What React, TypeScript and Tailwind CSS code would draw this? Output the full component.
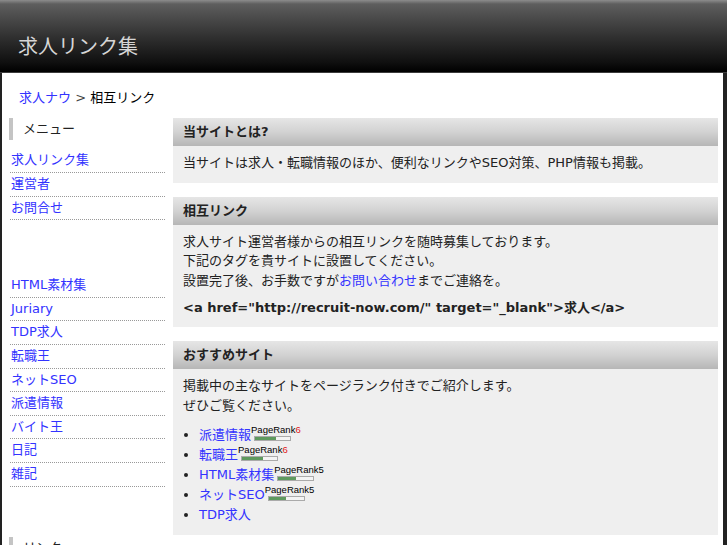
const topMenu = ["求人リンク集", "運営者", "お問合せ"]

const partnerMenu = [
  "HTML素材集",
  "Juriary",
  "TDP求人",
  "転職王",
  "ネットSEO",
  "派遣情報",
  "バイト王",
  "日記",
  "雑記",
]

const recommended = [
  { name: "派遣情報", rank: 6 },
  { name: "転職王", rank: 6 },
  { name: "HTML素材集", rank: 5 },
  { name: "ネットSEO", rank: 5 },
  { name: "TDP求人", rank: 0 },
]

function SideHeading({ label }: { label: string }) {
  return (
    <div className="flex h-[22px] items-center border-l-4 border-[#c4c4c4] pl-[10px] leading-[16px] text-[#222]">
      {label}
    </div>
  )
}

function SideLinks({ items }: { items: string[] }) {
  return (
    <ul>
      {items.map((item) => (
        <li key={item} className="ml-px border-b border-dotted border-[#999]">
          <a href="#" className="block pl-px pt-[3px] pb-[3.6px] leading-[16px] text-[#3333ff]">
            {item}
          </a>
        </li>
      ))}
    </ul>
  )
}

function PageRank({ rank }: { rank: number }) {
  return (
    <span className="relative -top-[3px] inline-flex flex-col align-middle font-['Liberation_Sans',sans-serif] text-[9.5px] leading-[10px] text-black">
      <span>
        PageRank<span className={rank >= 6 ? "text-[#e02020]" : ""}>{rank}</span>
      </span>
      <span className="mt-px ml-[3px] h-[5px] w-[37px] border border-[#aaa] bg-[#f4f4f4]">
        <span className={`block h-full bg-[#5e9a5e] ${rank >= 6 ? "w-[60%]" : "w-[50%]"}`} />
      </span>
    </span>
  )
}

function Box({ title, children }: { title: string; children: React.ReactNode }) {
  return (
    <section className="mb-[14px]">
      <h2 className="flex h-[28px] items-center bg-[linear-gradient(#e6e6e6,#d2d2d2_50%,#b6b6b6)] px-[10px] font-bold leading-[16px] text-[#222]">
        {title}
      </h2>
      <div className="bg-[#efefef] px-[10px] pt-[7px] pb-[10px] leading-[19.5px]">{children}</div>
    </section>
  )
}

export default function App() {
  return (
    <div className="min-h-screen bg-[#222] font-['DejaVu_Sans','Noto_Sans_CJK_JP',sans-serif] text-[13px] text-[#222]">
      <header className="h-[73px] border-b border-[#3c3c3c] bg-[linear-gradient(#8c8c8c_0px,#5e5e5e_4px,#4a4a4a_18px,#2c2c2c_40px,#101010_62px,#000_72px)]">
        <h1 className="pl-[18px] pt-[34px] text-[20px] leading-[26px] font-normal text-[#d6d6d6]">
          求人リンク集
        </h1>
      </header>

      <div className="ml-[2px] mr-[4px] bg-white pb-[20px]">
        <nav className="pl-[17px] pt-[17px] leading-[16px]">
          <a href="#" className="text-[#3333ff]">
            求人ナウ
          </a>
          <span className="text-[#444]"> &gt; </span>
          <span className="text-black">相互リンク</span>
        </nav>

        <div className="mt-[12px] flex gap-[8px] pl-[7px] pr-[5px]">
          <aside className="w-[156px] shrink-0">
            <SideHeading label="メニュー" />
            <div className="mt-[9.4px]">
              <SideLinks items={topMenu} />
            </div>
            <div className="mt-[54px]">
              <SideLinks items={partnerMenu} />
            </div>
            <div className="mt-[50px]">
              <SideHeading label="リンク" />
            </div>
          </aside>

          <main className="flex-1">
            <Box title="当サイトとは?">
              <p>
                当サイトは求人・転職情報のほか、便利なリンクやSEO対策、PHP情報も掲載。
              </p>
            </Box>

            <Box title="相互リンク">
              <p>
                求人サイト運営者様からの相互リンクを随時募集しております。
                <br />
                下記のタグを貴サイトに設置してください。
                <br />
                設置完了後、お手数ですが
                <a href="#" className="text-[#3333ff]">
                  お問い合わせ
                </a>
                までご連絡を。
              </p>
              <p className="mt-[7.5px] font-bold">
                &lt;a href="http://recruit-now.com/" target="_blank"&gt;求人&lt;/a&gt;
              </p>
            </Box>

            <Box title="おすすめサイト">
              <p>
                掲載中の主なサイトをページランク付きでご紹介します。
                <br />
                ぜひご覧ください。
              </p>
              <ul className="mt-[10px] list-disc pl-[16px] leading-[20px]">
                {recommended.map((site) => (
                  <li key={site.name}>
                    <a href="#" className="text-[#3333ff]">
                      {site.name}
                    </a>
                    {site.rank > 0 && <PageRank rank={site.rank} />}
                  </li>
                ))}
              </ul>
            </Box>
          </main>
        </div>
      </div>
    </div>
  )
}
